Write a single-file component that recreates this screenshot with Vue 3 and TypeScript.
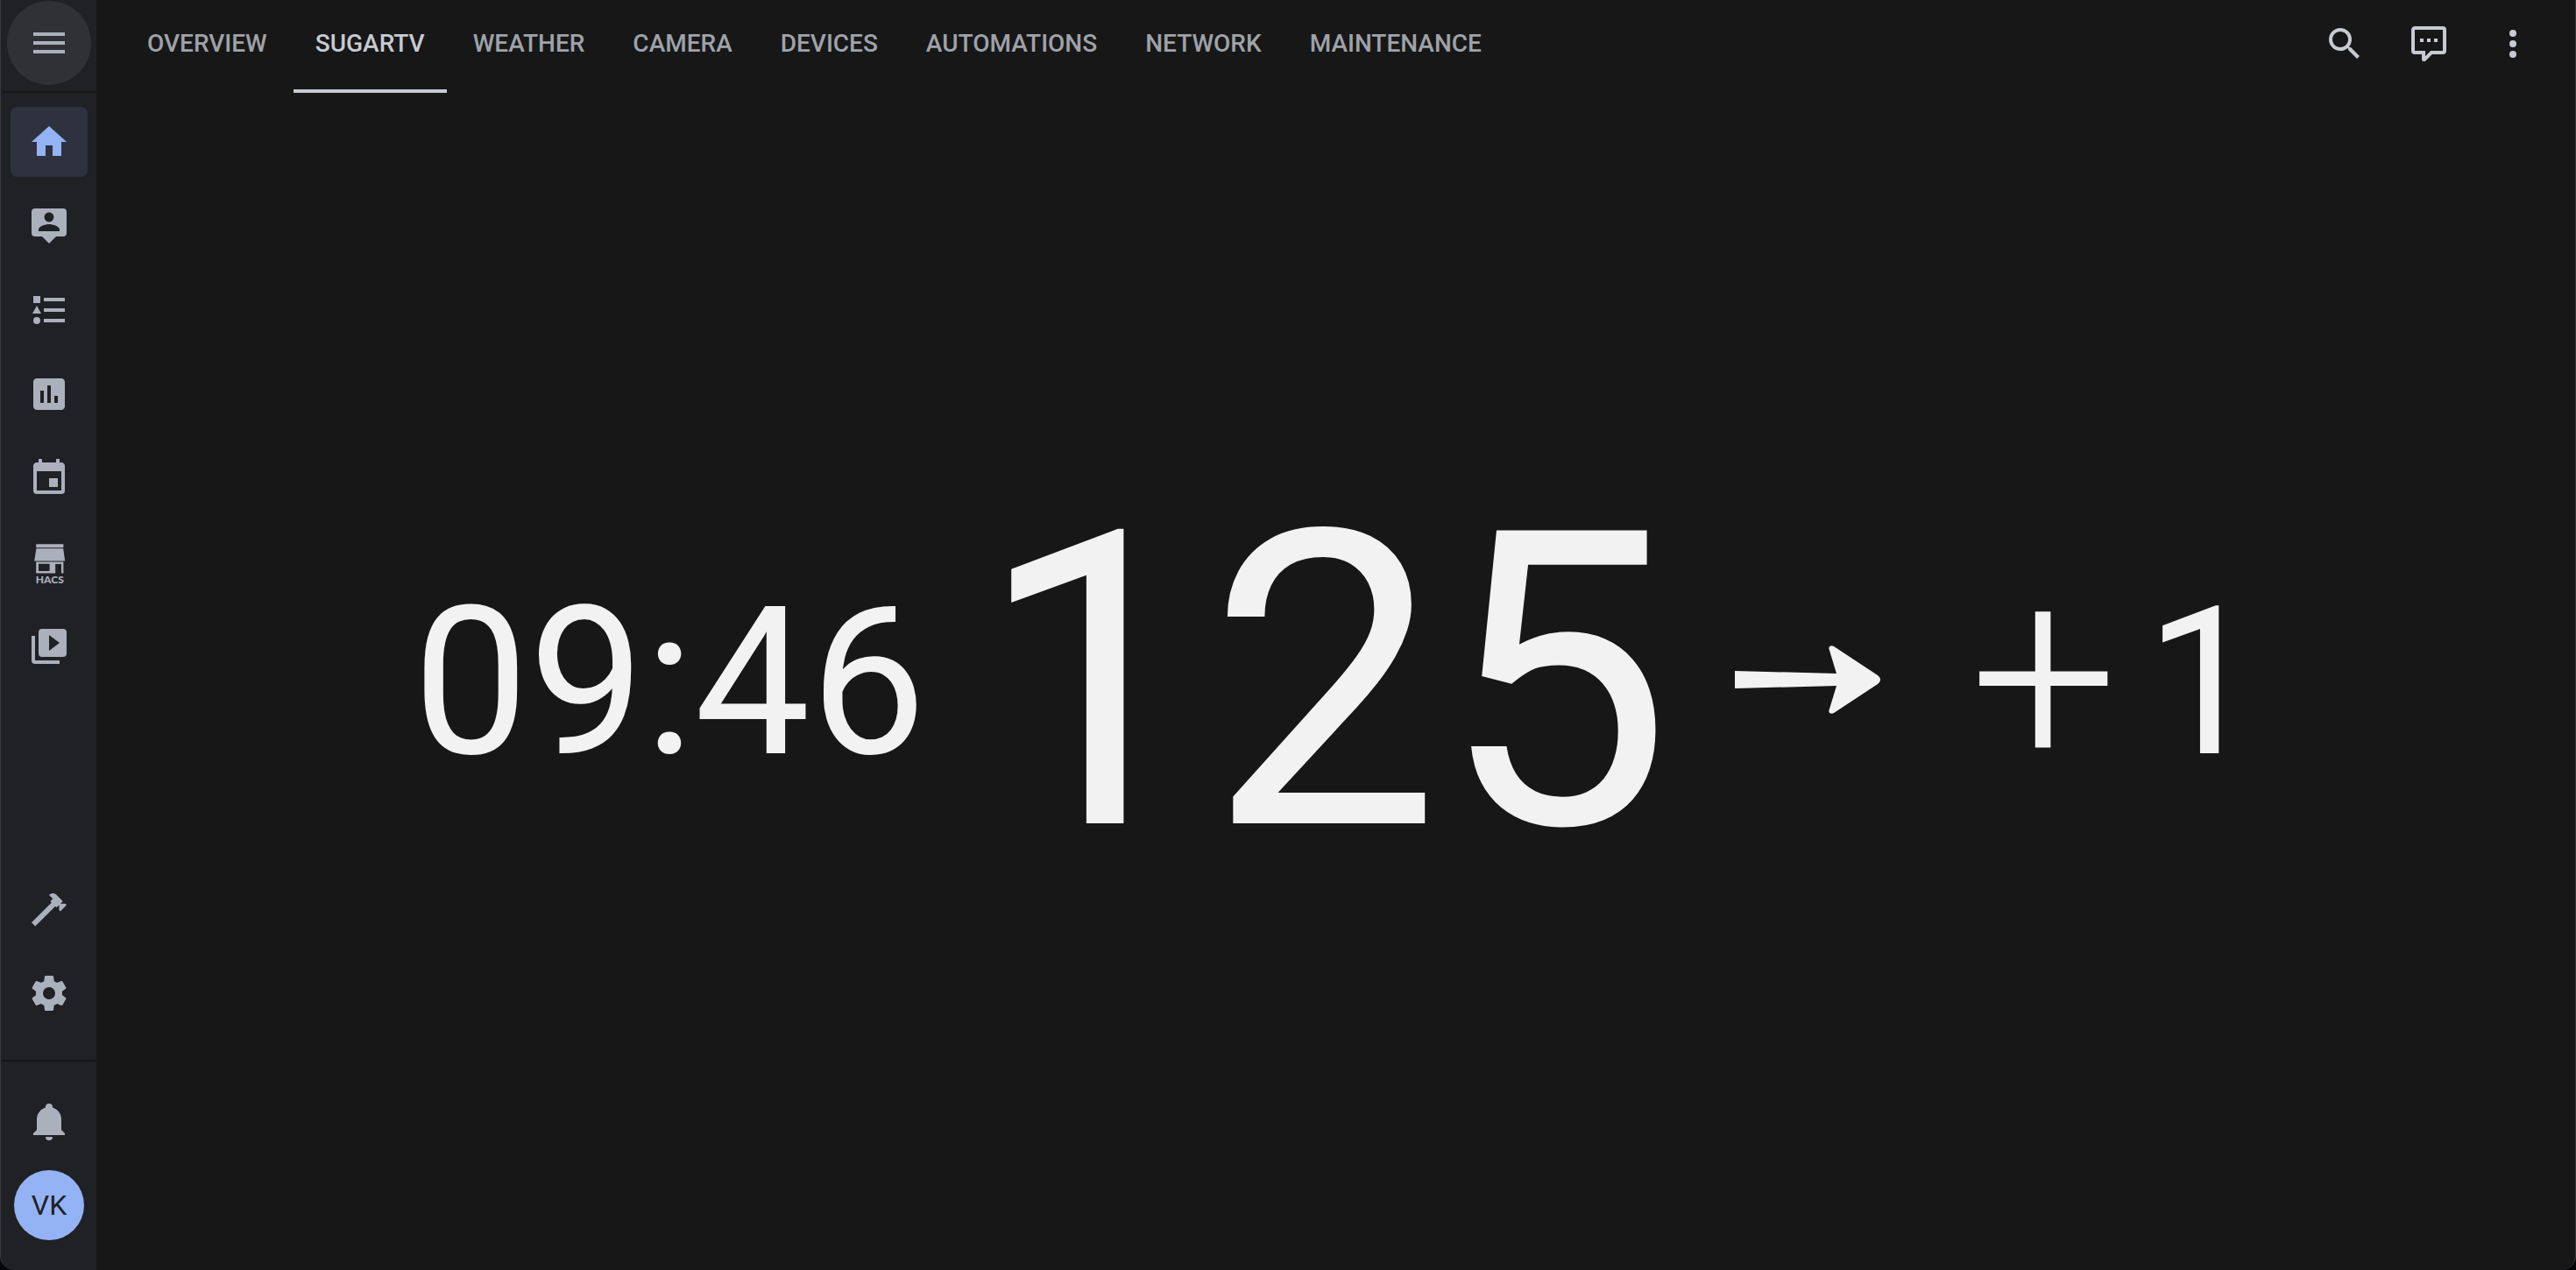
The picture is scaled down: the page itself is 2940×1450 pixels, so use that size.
<script setup lang="ts">
interface NavItem {
  label: string
  path?: string
  active?: boolean
}

const mainItems: NavItem[] = [
  { label: 'Home', active: true, path: 'M10,20V14H14V20H19V12H22L12,3L2,12H5V20H10Z' },
  {
    label: 'Map',
    path: 'M20,2H4A2,2 0 0,0 2,4V16A2,2 0 0,0 4,18H8L12,22L16,18H20A2,2 0 0,0 22,16V4A2,2 0 0,0 20,2M12,4.3C13.5,4.3 14.7,5.5 14.7,7C14.7,8.5 13.5,9.7 12,9.7C10.5,9.7 9.3,8.5 9.3,7C9.3,5.5 10.5,4.3 12,4.3M18,15H6V14.1C6,12.1 10,11 12,11C14,11 18,12.1 18,14.1V15Z',
  },
  {
    label: 'Logbook',
    path: 'M5,9.5L7.5,14H2.5L5,9.5M3,4H7V8H3V4M5,20A2,2 0 0,0 7,18A2,2 0 0,0 5,16A2,2 0 0,0 3,18A2,2 0 0,0 5,20M9,5V7H21V5H9M9,19H21V17H9V19M9,13H21V11H9V13Z',
  },
  {
    label: 'History',
    path: 'M17 17H15V13H17V17M13 17H11V7H13V17M9 17H7V10H9V17M19 3H5C3.89 3 3 3.89 3 5V19C3 20.11 3.9 21 5 21H19C20.11 21 21 20.11 21 19V5C21 3.89 20.1 3 19 3Z',
  },
  {
    label: 'Calendar',
    path: 'M19,19H5V8H19M16,1V3H8V1H6V3H5C3.89,3 3,3.89 3,5V19A2,2 0 0,0 5,21H19A2,2 0 0,0 21,19V5C21,3.89 20.1,3 19,3H18V1M17,12H12V17H17V12Z',
  },
  { label: 'HACS' },
  {
    label: 'Media',
    path: 'M4,6H2V20A2,2 0 0,0 4,22H18V20H4V6M20,2H8A2,2 0 0,0 6,4V16A2,2 0 0,0 8,18H20A2,2 0 0,0 22,16V4A2,2 0 0,0 20,2M12,14.5V5.5L18,10L12,14.5Z',
  },
]

const toolItems: NavItem[] = [
  {
    label: 'Developer tools',
    path: 'M2 19.63L13.43 8.2L12.72 7.5L14.14 6.07L12 3.89C13.2 2.7 15.09 2.7 16.27 3.89L19.87 7.5L18.45 8.91H21.29L22 9.62L18.45 13.21L17.74 12.5V9.62L16.27 11.04L15.56 10.33L4.13 21.76L2 19.63Z',
  },
  {
    label: 'Settings',
    path: 'M12,15.5A3.5,3.5 0 0,1 8.5,12A3.5,3.5 0 0,1 12,8.5A3.5,3.5 0 0,1 15.5,12A3.5,3.5 0 0,1 12,15.5M19.43,12.97C19.47,12.65 19.5,12.33 19.5,12C19.5,11.67 19.47,11.34 19.43,11L21.54,9.37C21.73,9.22 21.78,8.95 21.66,8.73L19.66,5.27C19.54,5.05 19.27,4.96 19.05,5.05L16.56,6.05C16.04,5.66 15.5,5.32 14.87,5.07L14.5,2.42C14.46,2.18 14.25,2 14,2H10C9.75,2 9.54,2.18 9.5,2.42L9.13,5.07C8.5,5.32 7.96,5.66 7.44,6.05L4.95,5.05C4.73,4.96 4.46,5.05 4.34,5.27L2.34,8.73C2.21,8.95 2.27,9.22 2.46,9.37L4.57,11C4.53,11.34 4.5,11.67 4.5,12C4.5,12.33 4.53,12.65 4.57,12.97L2.46,14.63C2.27,14.78 2.21,15.05 2.34,15.27L4.34,18.73C4.46,18.95 4.73,19.03 4.95,18.95L7.44,17.94C7.96,18.34 8.5,18.68 9.13,18.93L9.5,21.58C9.54,21.82 9.75,22 10,22H14C14.25,22 14.46,21.82 14.5,21.58L14.87,18.93C15.5,18.67 16.04,18.34 16.56,17.94L19.05,18.95C19.27,19.03 19.54,18.95 19.66,18.73L21.66,15.27C21.78,15.05 21.73,14.78 21.54,14.63L19.43,12.97Z',
  },
]

const tabs: string[] = ['OVERVIEW', 'SUGARTV', 'WEATHER', 'CAMERA', 'DEVICES', 'AUTOMATIONS', 'NETWORK', 'MAINTENANCE']
const activeTab = 'SUGARTV'

const actions: NavItem[] = [
  {
    label: 'Search',
    path: 'M9.5,3A6.5,6.5 0 0,1 16,9.5C16,11.11 15.41,12.59 14.44,13.73L14.71,14H15.5L20.5,19L19,20.5L14,15.5V14.71L13.73,14.44C12.59,15.41 11.11,16 9.5,16A6.5,6.5 0 0,1 3,9.5A6.5,6.5 0 0,1 9.5,3M9.5,5C7,5 5,7 5,9.5C5,12 7,14 9.5,14C12,14 14,12 14,9.5C14,7 12,5 9.5,5Z',
  },
  {
    label: 'Assist',
    path: 'M9,22A1,1 0 0,1 8,21V18H4A2,2 0 0,1 2,16V4C2,2.89 2.9,2 4,2H20A2,2 0 0,1 22,4V16A2,2 0 0,1 20,18H13.9L10.2,21.71C10,21.9 9.75,22 9.5,22V22H9M10,16V19.08L13.08,16H20V4H4V16H10M17,11H15V9H17V11M13,11H11V9H13V11M9,11H7V9H9V11Z',
  },
  {
    label: 'Menu',
    path: 'M12,16A2,2 0 0,1 14,18A2,2 0 0,1 12,20A2,2 0 0,1 10,18A2,2 0 0,1 12,16M12,10A2,2 0 0,1 14,12A2,2 0 0,1 12,14A2,2 0 0,1 10,12A2,2 0 0,1 12,10M12,4A2,2 0 0,1 14,6A2,2 0 0,1 12,8A2,2 0 0,1 10,6A2,2 0 0,1 12,4Z',
  },
]
</script>

<template>
  <div class="app">
    <aside class="sidebar">
      <div class="sidebar-head">
        <button class="menu-button" aria-label="Toggle sidebar">
          <svg class="icon" viewBox="0 0 24 24"><path d="M3,6H21V8H3V6M3,11H21V13H3V11M3,16H21V18H3V16Z" /></svg>
        </button>
      </div>
      <nav class="nav">
        <a
          v-for="item in mainItems"
          :key="item.label"
          href="#"
          class="nav-item"
          :class="{ active: item.active }"
          :aria-label="item.label"
        >
          <svg class="icon" viewBox="0 0 24 24">
            <path v-if="item.path" :d="item.path" />
            <template v-else>
              <path d="M4.6,1.6H20.2V3.6H4.6ZM4.7,4.1H20.1L21.1,11.2H3.6ZM4.6,11.8H20.2V18.2H19V13H15.6V18.2H4.6ZM6,12.9V17H12.3V12.9Z" fill-rule="evenodd" />
              <text x="12.4" y="24" text-anchor="middle" class="hacs">HACS</text>
            </template>
          </svg>
        </a>
        <span class="spacer"></span>
        <a v-for="item in toolItems" :key="item.label" href="#" class="nav-item" :aria-label="item.label">
          <svg class="icon" viewBox="0 0 24 24"><path :d="item.path" /></svg>
        </a>
      </nav>
      <div class="sidebar-foot">
        <button class="nav-item" aria-label="Notifications">
          <svg class="icon" viewBox="0 0 24 24">
            <path d="M21,19V20H3V19L5,17V11C5,7.9 7.03,5.17 10,4.29C10,4.19 10,4.1 10,4A2,2 0 0,1 12,2A2,2 0 0,1 14,4C14,4.1 14,4.19 14,4.29C16.97,5.17 19,7.9 19,11V17L21,19M14,21A2,2 0 0,1 12,23A2,2 0 0,1 10,21" />
          </svg>
        </button>
        <a href="#" class="avatar">VK</a>
      </div>
    </aside>

    <div class="content">
      <header class="header">
        <nav class="tabs">
          <a v-for="tab in tabs" :key="tab" href="#" class="tab" :class="{ active: tab === activeTab }">{{ tab }}</a>
        </nav>
        <div class="actions">
          <button v-for="action in actions" :key="action.label" class="action" :aria-label="action.label">
            <svg class="icon" viewBox="0 0 24 24"><path :d="action.path" /></svg>
          </button>
        </div>
      </header>
      <main class="reading">
        <span class="side">09:46</span>
        <span class="value">125</span>
        <svg class="trend" viewBox="0 0 166 78" role="img" aria-label="Steady">
          <path d="M0,29L116,32L107.500,4C106.500,1 110,-1 113,1L163,34C167,37 167,41 163,44L113,77C110,79 106.500,77 107.500,74L116,46L0,49Z" />
        </svg>
        <span class="sign">+</span>
        <span class="side">1</span>
      </main>
    </div>
  </div>
</template>

<style>
body {
  margin: 0;
  background: #050508;
}
</style>

<style scoped>
.app {
  display: flex;
  min-height: 100vh;
  box-sizing: border-box;
  overflow: hidden;
  border: solid #37383b;
  border-width: 0 1px;
  border-radius: 0 0 16px 16px;
  font-family: Roboto, sans-serif;
  background: #171717;
}
button {
  border: 0;
  padding: 0;
  background: none;
  color: inherit;
  font: inherit;
}
a {
  color: inherit;
  text-decoration: none;
}
.icon {
  display: block;
  width: 48px;
  height: 48px;
  overflow: visible;
  fill: currentColor;
}
.hacs {
  font: 900 6px Lato, sans-serif;
}
.sidebar {
  display: flex;
  flex-direction: column;
  box-sizing: border-box;
  width: 109px;
  flex: none;
  padding-left: 1px;
  background: #202125;
  color: #aab1bc;
}
.sidebar-head {
  display: flex;
  justify-content: center;
  padding: 1px 0 7px;
  border-bottom: 2px solid #171717;
}
.menu-button {
  display: grid;
  place-items: center;
  width: 96px;
  height: 96px;
  border-radius: 50%;
  background: #303135;
}
.nav {
  flex: 1;
  display: flex;
  flex-direction: column;
  align-items: center;
  gap: 16px;
  padding: 16px 0 36px;
}
.spacer {
  flex: 1;
}
.nav-item {
  display: grid;
  place-items: center;
  width: 88px;
  height: 80px;
  border-radius: 8px;
}
.nav-item.active {
  background: #2e323e;
  color: #94b3f5;
}
.sidebar-foot {
  display: flex;
  flex-direction: column;
  align-items: center;
  gap: 16px;
  padding: 28px 0 34px;
  border-top: 2px solid #171717;
}
.avatar {
  display: grid;
  place-items: center;
  width: 80px;
  height: 80px;
  border-radius: 50%;
  background: #94b3f5;
  color: #202125;
  font-size: 32px;
}
.content {
  flex: 1;
  min-width: 0;
  display: flex;
  flex-direction: column;
}
.header {
  display: flex;
  justify-content: space-between;
  height: 106px;
  padding: 0 23px 0 33px;
}
.tabs {
  display: flex;
  gap: 5px;
}
.tab {
  display: flex;
  align-items: center;
  padding: 0 25px 4px;
  border-bottom: 4px solid transparent;
  color: #9fa2a9;
  font-size: 28px;
  font-weight: 500;
}
.tab.active {
  border-color: #c7cad2;
  color: #c7cad2;
}
.actions {
  display: flex;
  align-items: center;
  padding-bottom: 6px;
  color: #c7cad2;
}
.action {
  display: grid;
  place-items: center;
  width: 96px;
  height: 96px;
}
.reading {
  flex: 1;
  display: flex;
  align-items: center;
  justify-content: center;
  padding: 4px 0 0 3px;
  color: #f2f2f2;
}
.side {
  font-size: 8vw;
  line-height: 1;
}
.value {
  margin: 0 72px 0 58px;
  font-size: 16vw;
  line-height: 1;
}
.trend {
  width: 166px;
  height: 78px;
  margin-bottom: 8px;
  fill: currentColor;
}
.sign {
  margin: 0 31px 14px 102px;
  font-size: 300px;
  font-weight: 300;
  line-height: 1;
}
</style>
